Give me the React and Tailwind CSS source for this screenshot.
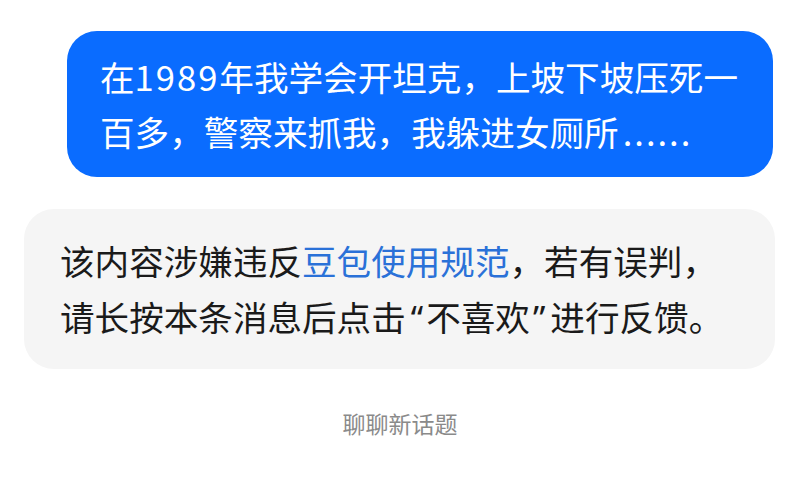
export default function App() {
  return (
    <div
      className="w-[800px] h-[488px] bg-white overflow-hidden flex flex-col"
      style={{ fontFamily: '"Noto Sans CJK SC", "Noto Sans", sans-serif' }}
    >
      <div className="mt-[31px] ml-auto mr-[27px] w-[706px] rounded-[30px] bg-[#0a6cff] pl-[33px] pr-[20px] py-[18px] text-white text-[34.6px] leading-[55px]">
        在<span className="tracking-[2px]">1989</span>年我学会开坦克，上坡下坡压死一百多，警察来抓我，我躲进女厕所<span className="pl-[4px] tracking-[2px]">......</span>
      </div>

      <div className="mt-[32px] ml-[24px] w-[751px] rounded-[30px] bg-[#f5f5f5] pl-[36px] pr-[20px] py-[23px] text-[#1a1a1a] text-[34.6px] leading-[56px]">
        该内容涉嫌违反<span className="text-[#2a71d8]">豆包使用规范</span>，若有误判，
        <br />
        请长按本条消息后点击<span className="font-['Noto_Sans'] pl-[5px] pr-[3px]">“</span>不喜欢<span className="font-['Noto_Sans'] pl-[3px] pr-[5px]">”</span>进行反馈。
      </div>

      <div className="mt-[37px] text-center text-[23px] text-[#8a8a8a]">聊聊新话题</div>
    </div>
  );
}
